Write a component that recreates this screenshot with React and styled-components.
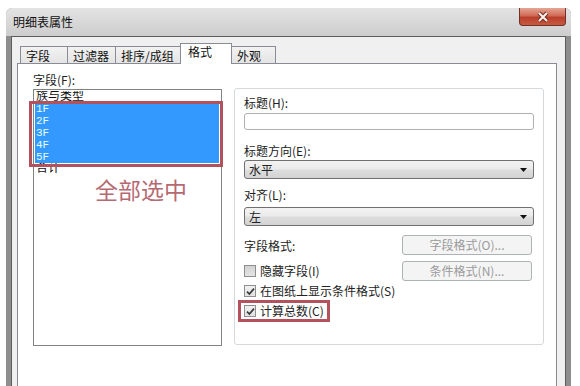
import styled, { createGlobalStyle } from "styled-components";

const GlobalStyle = createGlobalStyle`
  html, body {
    margin: 0;
    padding: 0;
    background: #ffffff;
    overflow: hidden;
  }
  body {
    width: 580px;
    height: 386px;
    font-family: "Noto Sans CJK SC", "Liberation Sans", sans-serif;
    font-size: 12px;
    color: #222;
  }
`;

const TABS = [
  { label: "字段", w: 48 },
  { label: "过滤器", w: 49 },
  { label: "排序/成组", w: 66 },
  { label: "格式", w: 52, active: true },
  { label: "外观", w: 45 },
];

const FIELDS = [
  { name: "族与类型" },
  { name: "1F", sel: true },
  { name: "2F", sel: true },
  { name: "3F", sel: true },
  { name: "4F", sel: true },
  { name: "5F", sel: true },
  { name: "合计" },
];

function CheckMark() {
  return (
    <svg width="9" height="9" viewBox="0 0 9 9">
      <path d="M1 4.6 L3.4 7 L8 1.6" fill="none" stroke="#3a3a3a" strokeWidth="1.7" />
    </svg>
  );
}

function Arrow() {
  return (
    <svg width="7" height="4" viewBox="0 0 7 4">
      <path d="M0 0 H7 L3.5 4 Z" fill="#111" />
    </svg>
  );
}

export default function App() {
  return (
    <>
      <GlobalStyle />
      <Window>
        <TitleBar>
          <Title>明细表属性</Title>
          <CloseButton>
            <svg width="12" height="12" viewBox="0 0 12 12">
              <path d="M2 2 L10 10 M10 2 L2 10" stroke="#6a2a22" strokeWidth="4" />
              <path d="M2 2 L10 10 M10 2 L2 10" stroke="#fbeee8" strokeWidth="2.2" />
            </svg>
          </CloseButton>
        </TitleBar>
        <Client>
          <TabStrip>
            {TABS.map((t, i) => (
              <Tab key={i} $w={t.w} $active={t.active}>
                {t.label}
              </Tab>
            ))}
          </TabStrip>
          <TabPage>
            <LeftCol>
              <Label>字段(F):</Label>
              <ListBox>
                {FIELDS.map((f, i) => (
                  <ListItem key={i} $sel={f.sel}>
                    {f.name}
                  </ListItem>
                ))}
                <ListMark />
                <Note>全部选中</Note>
              </ListBox>
            </LeftCol>
            <Group>
              <Label>标题(H):</Label>
              <TextInput />
              <Label $mt={14}>标题方向(E):</Label>
              <Combo>
                <span>水平</span>
                <Arrow />
              </Combo>
              <Label $mt={9}>对齐(L):</Label>
              <Combo $mt={3}>
                <span>左</span>
                <Arrow />
              </Combo>
              <ButtonRow $mt={9}>
                <span>字段格式:</span>
                <FlatButton>字段格式(O)...</FlatButton>
              </ButtonRow>
              <ButtonRow $mt={6}>
                <CheckRow>
                  <Box />
                  隐藏字段(I)
                </CheckRow>
                <FlatButton>条件格式(N)...</FlatButton>
              </ButtonRow>
              <CheckRow $mt={3}>
                <Box $checked>
                  <CheckMark />
                </Box>
                在图纸上显示条件格式(S)
              </CheckRow>
              <CheckRow $mt={6} $marked>
                <Box $checked>
                  <CheckMark />
                </Box>
                计算总数(C)
              </CheckRow>
            </Group>
          </TabPage>
        </Client>
      </Window>
    </>
  );
}

const Window = styled.div`
  margin: 8px 0 0 6px;
  width: 565px;
  height: 378px;
  display: flex;
  flex-direction: column;
  background: #8e8e8e;
  border-radius: 6px 6px 0 0;
  overflow: hidden;
`;

const TitleBar = styled.div`
  height: 28px;
  flex-shrink: 0;
  display: flex;
  align-items: flex-start;
  justify-content: space-between;
  padding: 0 5px 0 7px;
  background: linear-gradient(#e3e3e3, #d6d6d6 60%, #cdcdcd);
`;

const Title = styled.div`
  line-height: 28px;
  font-size: 12px;
  color: #111;
`;

const CloseButton = styled.div`
  width: 45px;
  height: 17px;
  display: flex;
  align-items: center;
  justify-content: center;
  border: 1px solid #70312a;
  border-top: none;
  border-radius: 0 0 4px 4px;
  background: linear-gradient(#e5a595, #d06a55 45%, #b9402c 55%, #c85a3f);
`;

const Client = styled.div`
  flex: 1;
  display: flex;
  flex-direction: column;
  margin: 0 5px;
  padding: 6px 8px 0 5px;
  background: #f0f0f0;
  border: 1px solid #5c5c5c;
  border-bottom: none;
`;

const TabStrip = styled.div`
  height: 20px;
  display: flex;
  align-items: flex-end;
  padding-left: 3px;
`;

const Tab = styled.div`
  position: relative;
  box-sizing: border-box;
  width: ${(p) => p.$w}px;
  height: ${(p) => (p.$active ? 21 : 17)}px;
  margin-left: -1px;
  margin-bottom: ${(p) => (p.$active ? -1 : 0)}px;
  padding-left: ${(p) => (p.$active ? 7 : 5)}px;
  border: 1px solid #898c95;
  border-bottom: none;
  background: ${(p) =>
    p.$active ? "#ffffff" : "linear-gradient(#f2f2f2, #e4e4e4)"};
  line-height: ${(p) => (p.$active ? 15 : 17)}px;
  font-size: 12px;
  color: #111;
  z-index: ${(p) => (p.$active ? 2 : 1)};
  &:first-child {
    margin-left: 0;
  }
`;

const TabPage = styled.div`
  flex: 1;
  display: flex;
  align-items: flex-start;
  padding: 9px 12px 0 15px;
  background: #ffffff;
  border: 1px solid #898c95;
  border-bottom: none;
`;

const LeftCol = styled.div`
  display: flex;
  flex-direction: column;
`;

const Label = styled.div`
  height: 14px;
  line-height: 14px;
  margin-top: ${(p) => p.$mt || 0}px;
  margin-bottom: 2px;
  white-space: nowrap;
`;

const ListBox = styled.div`
  position: relative;
  box-sizing: border-box;
  width: 189px;
  height: 257px;
  padding: 1px 1px 0 0;
  border: 1px solid #828282;
  background: #fff;
  font-family: "Liberation Mono", "Noto Sans CJK SC", monospace;
`;

const ListItem = styled.div`
  height: 12px;
  line-height: 12px;
  margin: 0 1px;
  padding-left: 1px;
  font-size: ${(p) => (p.$sel ? 11 : 12)}px;
  background: ${(p) => (p.$sel ? "#3399ff" : "transparent")};
  color: ${(p) => (p.$sel ? "#e6fbff" : "#111")};
  overflow: hidden;
`;

const ListMark = styled.div`
  position: absolute;
  left: -5px;
  top: 11px;
  width: 188px;
  height: 60px;
  border: 3px solid #b3525c;
`;

const Note = styled.div`
  position: absolute;
  left: 61px;
  top: 90px;
  font-size: 23px;
  line-height: 26px;
  color: #b56a72;
  white-space: nowrap;
`;

const Group = styled.div`
  box-sizing: border-box;
  width: 310px;
  height: 257px;
  margin: 15px 0 0 12px;
  padding: 7px 9px 0 9px;
  border: 1px solid #d5d9dc;
  border-radius: 3px;
  display: flex;
  flex-direction: column;
`;

const TextInput = styled.div`
  box-sizing: border-box;
  width: 290px;
  height: 17px;
  margin-top: 1px;
  border: 1px solid #b0b0b0;
  border-radius: 3px;
  background: #fff;
`;

const Combo = styled.div`
  box-sizing: border-box;
  width: 290px;
  height: 19px;
  margin-top: ${(p) => p.$mt || 0}px;
  padding: 0 6px 0 4px;
  display: flex;
  align-items: center;
  justify-content: space-between;
  border: 1px solid #707070;
  border-radius: 3px;
  background: linear-gradient(#f3f3f3, #ebebeb 45%, #dddddd 55%, #d3d3d3);
  line-height: 17px;
`;

const ButtonRow = styled.div`
  height: 20px;
  margin-top: ${(p) => p.$mt || 0}px;
  padding-right: 2px;
  display: flex;
  align-items: center;
  justify-content: space-between;
`;

const FlatButton = styled.div`
  box-sizing: border-box;
  width: 130px;
  height: 20px;
  border: 1px solid #adb2b5;
  border-radius: 3px;
  background: #f4f4f4;
  color: #9a9a9a;
  text-align: center;
  line-height: 18px;
`;

const CheckRow = styled.div`
  position: relative;
  height: 14px;
  margin-top: ${(p) => p.$mt || 0}px;
  display: flex;
  align-items: center;
  gap: 4px;
  line-height: 14px;
  white-space: nowrap;
  &::after {
    content: "";
    display: ${(p) => (p.$marked ? "block" : "none")};
    position: absolute;
    left: -6px;
    top: -4px;
    width: 86px;
    height: 16px;
    border: 3px solid #b3525c;
  }
`;

const Box = styled.span`
  box-sizing: border-box;
  width: 12px;
  height: 12px;
  display: inline-flex;
  align-items: center;
  justify-content: center;
  border: 1px solid #8f8f8f;
  background: ${(p) =>
    p.$checked
      ? "linear-gradient(#f0f0f0, #e2e2e2)"
      : "linear-gradient(#d2d2d2, #e4e4e4)"};
`;
